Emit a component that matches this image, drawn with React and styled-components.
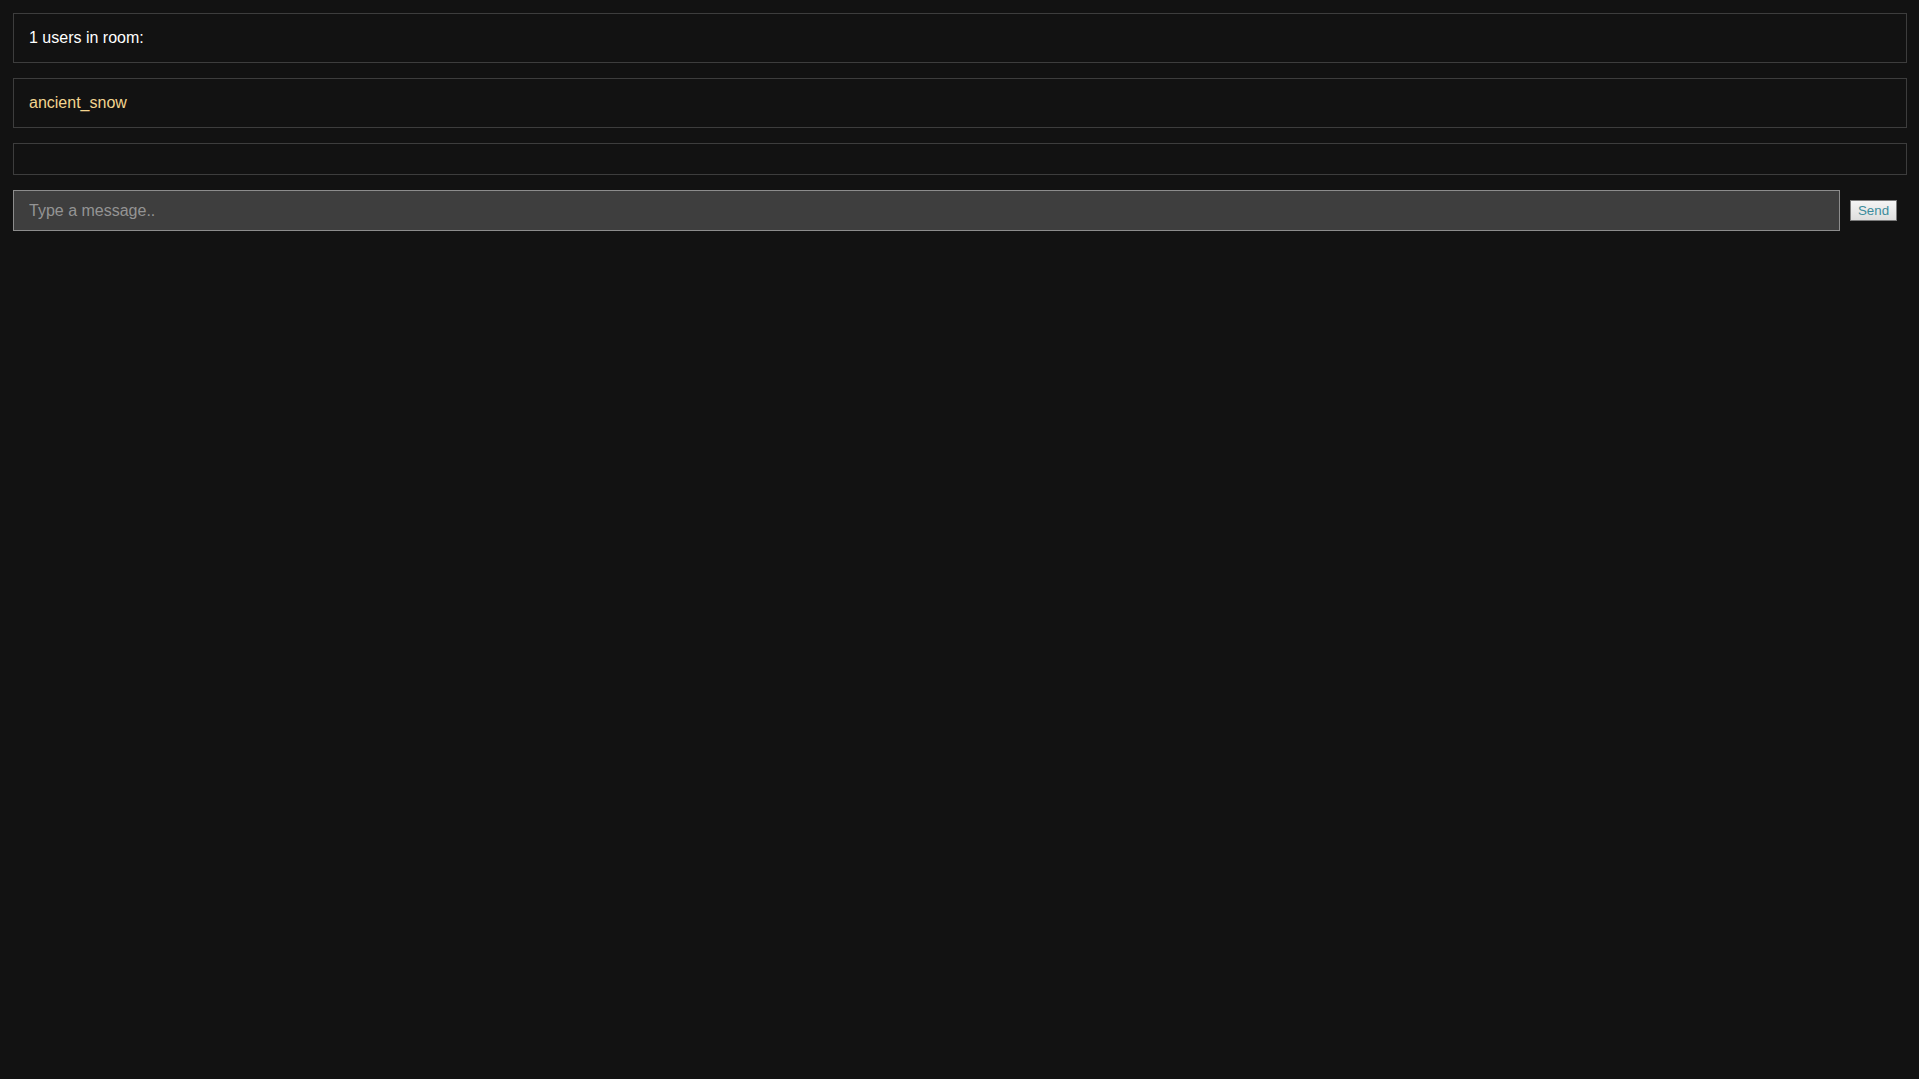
import React from 'react'
import styled, { createGlobalStyle } from 'styled-components'

const Global = createGlobalStyle`
  html, body {
    margin: 0;
    background: #121212;
    font-family: Arial, "Liberation Sans", sans-serif;
  }
`

const Page = styled.div`
  padding: 13px 12px 0 13px;
  min-height: 100vh;
  box-sizing: border-box;
`

const Panel = styled.div`
  border: 1px solid #3d3d3d;
  padding: 15px;
  margin-bottom: 15px;
  font-size: 16px;
  line-height: 18px;
  color: ${props => props.tone || '#ffffff'};
`

const InputRow = styled.form`
  display: flex;
  align-items: center;
`

const MessageInput = styled.input`
  flex: 1;
  height: 41px;
  box-sizing: border-box;
  background: #3e3e3e;
  border: 1px solid #8c8c8c;
  padding: 0 15px;
  font-family: Arial, "Liberation Sans", sans-serif;
  font-size: 16px;
  color: #ddd;
  outline: none;

  &::placeholder {
    color: #949494;
  }
`

const SendButton = styled.button`
  margin: 0 10px;
  width: 47px;
  height: 21px;
  padding: 0;
  border: 1px solid #7a7a7a;
  background: linear-gradient(#f4f4f4, #dedede);
  color: #3c8c9c;
  font-family: Arial, "Liberation Sans", sans-serif;
  font-size: 13.33px;
  cursor: pointer;
`

const App = () => {
  const users = ['ancient_snow']
  return (
    <Page>
      <Global />
      <Panel>{users.length} users in room:</Panel>
      <Panel tone="#f3d58f">{users.join(', ')}</Panel>
      <Panel />
      <InputRow onSubmit={e => e.preventDefault()}>
        <MessageInput placeholder="Type a message.." />
        <SendButton type="submit">Send</SendButton>
      </InputRow>
    </Page>
  )
}

export default App
